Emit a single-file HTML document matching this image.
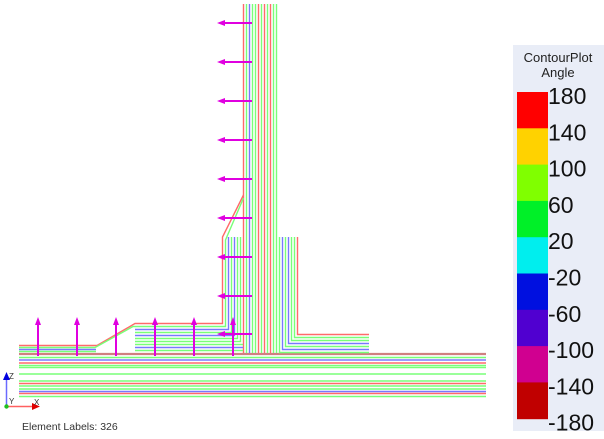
<!DOCTYPE html>
<html><head><meta charset="utf-8"><style>
html,body{margin:0;padding:0;background:#fff;width:604px;height:439px;overflow:hidden}
svg{display:block}
text{font-family:"Liberation Sans","DejaVu Sans",sans-serif}
</style></head><body>
<svg id="s" width="604" height="439" viewBox="0 0 604 439" xmlns="http://www.w3.org/2000/svg">
<rect x="513" y="45" width="91" height="386" fill="#e9edf7"/>
<text x="558" y="62" font-size="13" text-anchor="middle" fill="#222">ContourPlot</text>
<text x="558" y="77" font-size="13" text-anchor="middle" fill="#222">Angle</text>
<g id="leg"></g>
<g id="geo"></g>
<line x1="6.5" y1="406" x2="6.5" y2="378" stroke="#6a6aff" stroke-width="1.5"/>
<polygon points="3,380 10,380 6.5,372" fill="#0000e0"/>
<text x="9" y="379" font-size="8" fill="#333">Z</text>
<line x1="6" y1="406.5" x2="34" y2="406.5" stroke="#ff6060" stroke-width="1.5"/>
<polygon points="32,403 32,410 40,406.5" fill="#e00000"/>
<text x="34" y="405" font-size="8" fill="#333">X</text>
<text x="9" y="404" font-size="8" fill="#333">Y</text>
<circle cx="6.5" cy="406.5" r="2.2" fill="#20c020"/>
<text x="22" y="430" font-size="10.5" fill="#333">Element Labels: 326</text>
</svg>
<script>
(function(){
var NS="http://www.w3.org/2000/svg";
function el(p,t,a){var e=document.createElementNS(NS,t);for(var k in a)e.setAttribute(k,a[k]);p.appendChild(e);return e;}
var leg=document.getElementById('leg');
var cols=["#ff0000","#ffd200","#80ff00","#00f028","#00eeee","#0010e0","#5000d0","#d00090","#c00000"];
var labs=["180","140","100","60","20","-20","-60","-100","-140","-180"];
var t0=92,h=36.3;
for(var i=0;i<9;i++)el(leg,'rect',{x:517,y:t0+i*h,width:31,height:h+0.5,fill:cols[i]});
for(var i=0;i<10;i++){var t=el(leg,'text',{x:548,y:t0+i*h+12,'font-size':23,fill:'#111'});t.textContent=labs[i];}
var g=document.getElementById('geo');
var R="#ff6a6a",G="#78ff78",B="#7878ff";
function pl(pts,c,w){el(g,'polyline',{points:pts,fill:'none',stroke:c,'stroke-width':w||1.4});}
var by=[[354,"#d08080",2.2],[357.5,G],[360,B],[363,R],[365.5,G],[367.5,G],[374,G],[381,G],[383.5,R],[386,G],[389,G],[391.5,B],[393.5,R],[396.5,G]];
by.forEach(function(b){pl("19,"+b[0]+" 486,"+b[0],b[1],b[2]);});
var sc=[R,G,B,G,G,R,G,R,G,R,G,G];
for(var i=0;i<12;i++){var x=243.5+i*3;pl(x+",4 "+x+",353",sc[i]);}
var lc=[R,G,B,G,B,G,G];
for(var k=0;k<7;k++){var x=222.5+3*k,y=323.5+3*k;
 if(k<2){pl("243.5,"+(195+3*k)+" "+x+","+(237+3*k)+" "+x+","+y+" "+(135-2*k)+","+y+" "+(97-2*k)+","+(345.5+2*k)+" 19,"+(345.5+2*k),lc[k]);}
 else pl(x+",237 "+x+","+y+" 135,"+y,lc[k]);}
[[344.5,G],[347.5,B],[350.5,G]].forEach(function(a){pl("135,"+a[0]+" 243,"+a[0],a[1]);});
pl("19,349.5 96,349.5",B);pl("19,351.5 96,351.5",G);
var rc=[G,B,G,B,G,G,R];
for(var j=0;j<7;j++){var x=279.5+3*j,y=352.5-3*j;pl(x+",237 "+x+","+y+" 369,"+y,rc[j]);}
var M="#e000e0";
[23,62,101,140,179,218,257,296,334].forEach(function(y){pl("252,"+y+" 224,"+y,M,2);el(g,'polygon',{points:"217,"+y+" 225,"+(y-3)+" 225,"+(y+3),fill:M});});
[38,77,116,155,194,233].forEach(function(x){pl(x+",356 "+x+",324",M,2);el(g,'polygon',{points:x+",317 "+(x-3)+",325 "+(x+3)+",325",fill:M});});
})();
</script>
</body></html>
